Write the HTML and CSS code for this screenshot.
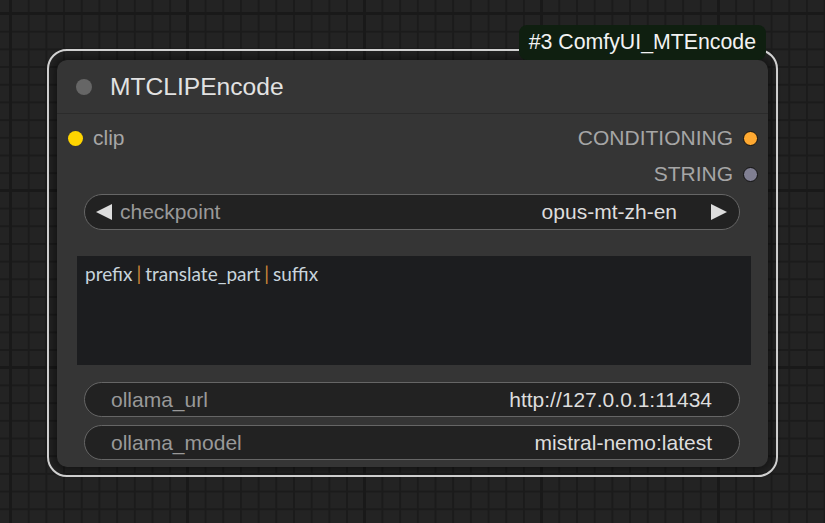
FILE: index.html
```html
<!DOCTYPE html>
<html>
<head>
<meta charset="utf-8">
<link rel="stylesheet" href="styles.css">
</head>
<body>
<div class="canvas">
  <div class="selection">
    <div class="badge">#3 ComfyUI_MTEncode</div>
    <div class="node">
      <div class="title">
        <span class="tdot"></span>
        <span class="tname">MTCLIPEncode</span>
      </div>
      <div class="slots">
        <div class="slot-row">
          <div class="slot-in"><span class="dot dot-clip"></span><span class="slot-label">clip</span></div>
          <div class="slot-out"><span class="slot-label">CONDITIONING</span><span class="dot dot-cond"></span></div>
        </div>
        <div class="slot-row">
          <div class="slot-in"></div>
          <div class="slot-out"><span class="slot-label">STRING</span><span class="dot dot-string"></span></div>
        </div>
      </div>
      <div class="widget combo">
        <svg class="arrow" width="18" height="18" viewBox="0 0 18 18"><polygon points="17,1 17,17 1,9" fill="#dddddd"/></svg>
        <span class="w-label combo-label">checkpoint</span>
        <span class="w-value">opus-mt-zh-en</span>
        <svg class="arrow" width="18" height="18" viewBox="0 0 18 18"><polygon points="1,1 1,17 17,9" fill="#dddddd"/></svg>
      </div>
      <div class="textarea"><span class="t">prefix</span><span class="pipe">|</span><span class="t">translate_part</span><span class="pipe">|</span><span class="t">suffix</span></div>
      <div class="widget text first">
        <span class="w-label">ollama_url</span>
        <span class="w-value">http://127.0.0.1:11434</span>
      </div>
      <div class="widget text second">
        <span class="w-label">ollama_model</span>
        <span class="w-value">mistral-nemo:latest</span>
      </div>
    </div>
  </div>
</div>
</body>
</html>
```

FILE: styles.css
```css
html, body {
  margin: 0;
  padding: 0;
}
body {
  width: 825px;
  height: 523px;
  overflow: hidden;
  background-color: #232323;
  background-image:
    linear-gradient(to right, #191919 3px, transparent 3px),
    linear-gradient(to bottom, #191919 3px, transparent 3px),
    linear-gradient(to right, #1b1b1b 2px, transparent 2px),
    linear-gradient(to bottom, #1b1b1b 2px, transparent 2px);
  background-size: 177px 177px, 177px 177px, 17.7px 17.7px, 17.7px 17.7px;
  background-position: 9px 12px, 9px 12px, 10px 13px, 10px 13px;
  font-family: "Liberation Sans", Arial, sans-serif;
}
.canvas {
  position: relative;
  width: 825px;
  height: 523px;
}
.selection {
  position: absolute;
  left: 47px;
  top: 49px;
  width: 731px;
  height: 428px;
  box-sizing: border-box;
  border: 2px solid #d6d6d6;
  border-radius: 20px;
  padding: 9px 8px 8px 8px;
  display: flex;
}
.badge {
  position: absolute;
  right: 10px;
  top: -26px;
  height: 35px;
  padding: 0 10px 0 10px;
  display: flex;
  align-items: center;
  background: #0f1f10;
  color: #f2f2f2;
  font-size: 21.3px;
  border-radius: 8px;
  white-space: nowrap;
}
.node {
  flex: 1;
  background: #353535;
  border-radius: 10px;
  box-shadow: 0 0 8px 3px rgba(0, 0, 0, 0.45);
  display: flex;
  flex-direction: column;
  overflow: hidden;
}
.title {
  height: 54px;
  border-bottom: 1px solid #2b2b2b;
  display: flex;
  align-items: center;
  padding-left: 19px;
  padding-top: 1px;
  box-sizing: border-box;
  gap: 18px;
}
.tdot {
  width: 16px;
  height: 16px;
  border-radius: 50%;
  background: #666666;
}
.tname {
  color: #e2e2e2;
  font-size: 24.6px;
}
.slots {
  padding: 6px 10px 0 11px;
  display: flex;
  flex-direction: column;
}
.slot-row {
  height: 36px;
  display: flex;
  align-items: center;
  justify-content: space-between;
}
.slot-in, .slot-out {
  display: flex;
  align-items: center;
}
.slot-in { gap: 10px; }
.slot-out { gap: 10px; }
.slot-label {
  color: #a6a6a6;
  font-size: 21px;
}
.dot {
  width: 15px;
  height: 15px;
  border-radius: 50%;
  box-sizing: border-box;
}
.dot-clip {
  background: #ffd500;
}
.dot-cond {
  background: #ffa931;
  border: 1.5px solid #111;
}
.dot-string {
  background: #807f92;
  border: 1.5px solid #111;
}
.widget {
  height: 36px;
  box-sizing: border-box;
  margin: 0 28px 0 27px;
  background: #222222;
  border: 1.5px solid #666666;
  border-radius: 18px;
  display: flex;
  align-items: center;
  font-size: 21px;
}
.combo {
  margin-top: 2px;
  padding: 0 11px 0 10px;
}
.combo .arrow {
  flex: none;
}
.w-label {
  color: #999999;
}
.combo-label {
  margin-left: 7px;
  flex: 1;
}
.w-value {
  color: #dddddd;
}
.combo .w-value {
  margin-right: 33px;
}
.textarea {
  margin: 26px 17px 0 20px;
  height: 109px;
  box-sizing: border-box;
  background: #1c1d1f;
  padding: 6px 8px;
  font-family: Lato, "Open Sans", sans-serif;
  font-size: 19px;
  line-height: 24px;
  color: #c8d4dc;
}
.pipe {
  color: #d2893a;
  margin: 0 4px;
}
.text {
  height: 35px;
  justify-content: space-between;
  padding: 0 27px 0 26px;
}
.text.first {
  margin-top: 17px;
}
.text.second {
  margin-top: 8px;
}
```
